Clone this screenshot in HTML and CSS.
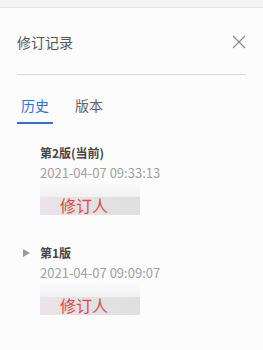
FILE: index.html
```html
<!DOCTYPE html>
<html lang="zh-CN">
<head>
    <meta charset="UTF-8">
    <title>修订记录</title>
    <link rel="stylesheet" href="styles.css">
</head>
<body>
    <div class="topbar"></div>
    <div class="panel">
        <div class="header">
            <span class="title">修订记录</span>
            <svg class="close" width="14" height="14" viewBox="0 0 14 14">
                <path d="M1 1L13 13M13 1L1 13" stroke="#888" stroke-width="1.1" fill="none"/>
            </svg>
        </div>
        <div class="tabs">
            <span class="tab active">历史</span>
            <span class="tab">版本</span>
        </div>
        <div class="list">
            <div class="item">
                <span class="arrow"></span>
                <div class="info">
                    <div class="name">第2版(当前)</div>
                    <div class="date">2021-04-07 09:33:13</div>
                    <div class="sign"><span>修订人</span></div>
                </div>
            </div>
            <div class="item">
                <span class="arrow show"></span>
                <div class="info">
                    <div class="name">第1版</div>
                    <div class="date">2021-04-07 09:09:07</div>
                    <div class="sign"><span>修订人</span></div>
                </div>
            </div>
        </div>
    </div>
</body>
</html>
```

FILE: styles.css
```css
body {
    margin: 0;
    background-color: #fcfcfc;
    font-family: "Noto Sans CJK SC", "Microsoft YaHei", sans-serif;
    color: #333;
}
.topbar {
    height: 7px;
    background-color: #f4f4f4;
    border-bottom: 1px solid #e2e2e2;
}
.panel {
    padding: 0 17px;
}
.header {
    display: flex;
    justify-content: space-between;
    align-items: center;
    height: 66px;
    border-bottom: 1px solid #d9d9d9;
}
.title {
    font-size: 14px;
    color: #555;
    margin-top: 1px;
}
.close {
    margin-top: 2px;
}
.tabs {
    display: flex;
    gap: 18px;
    margin-top: 20px;
}
.tab {
    font-size: 14px;
    color: #666;
    line-height: 20px;
    padding: 0 4px 7px;
}
.tab.active {
    color: #2f6fde;
    border-bottom: 2px solid #2f6fde;
}
.list {
    margin-top: 20px;
}
.item {
    display: flex;
    margin-bottom: 29px;
}
.arrow {
    width: 17px;
    margin-left: 6px;
    margin-top: 5px;
}
.arrow.show::before {
    content: "";
    display: block;
    width: 0;
    height: 0;
    border-left: 7px solid #999;
    border-top: 4.5px solid transparent;
    border-bottom: 4.5px solid transparent;
}
.name {
    font-size: 12px;
    font-weight: bold;
    color: #444;
    line-height: 18px;
}
.date {
    font-size: 13px;
    color: #a0a0a0;
    line-height: 18px;
    margin-top: 2px;
}
.sign {
    width: 100px;
    height: 31px;
    margin-top: 2px;
    background: linear-gradient(#fafafa 0, #f1f1f1 13px, transparent 13px),
                linear-gradient(90deg, #ece4e8 0, #e2e2e2 40px, #e0e0e0 100%);
    display: flex;
    align-items: flex-end;
}
.sign span {
    font-size: 16px;
    color: #e04848;
    line-height: 20px;
    padding-left: 20px;
}
```
